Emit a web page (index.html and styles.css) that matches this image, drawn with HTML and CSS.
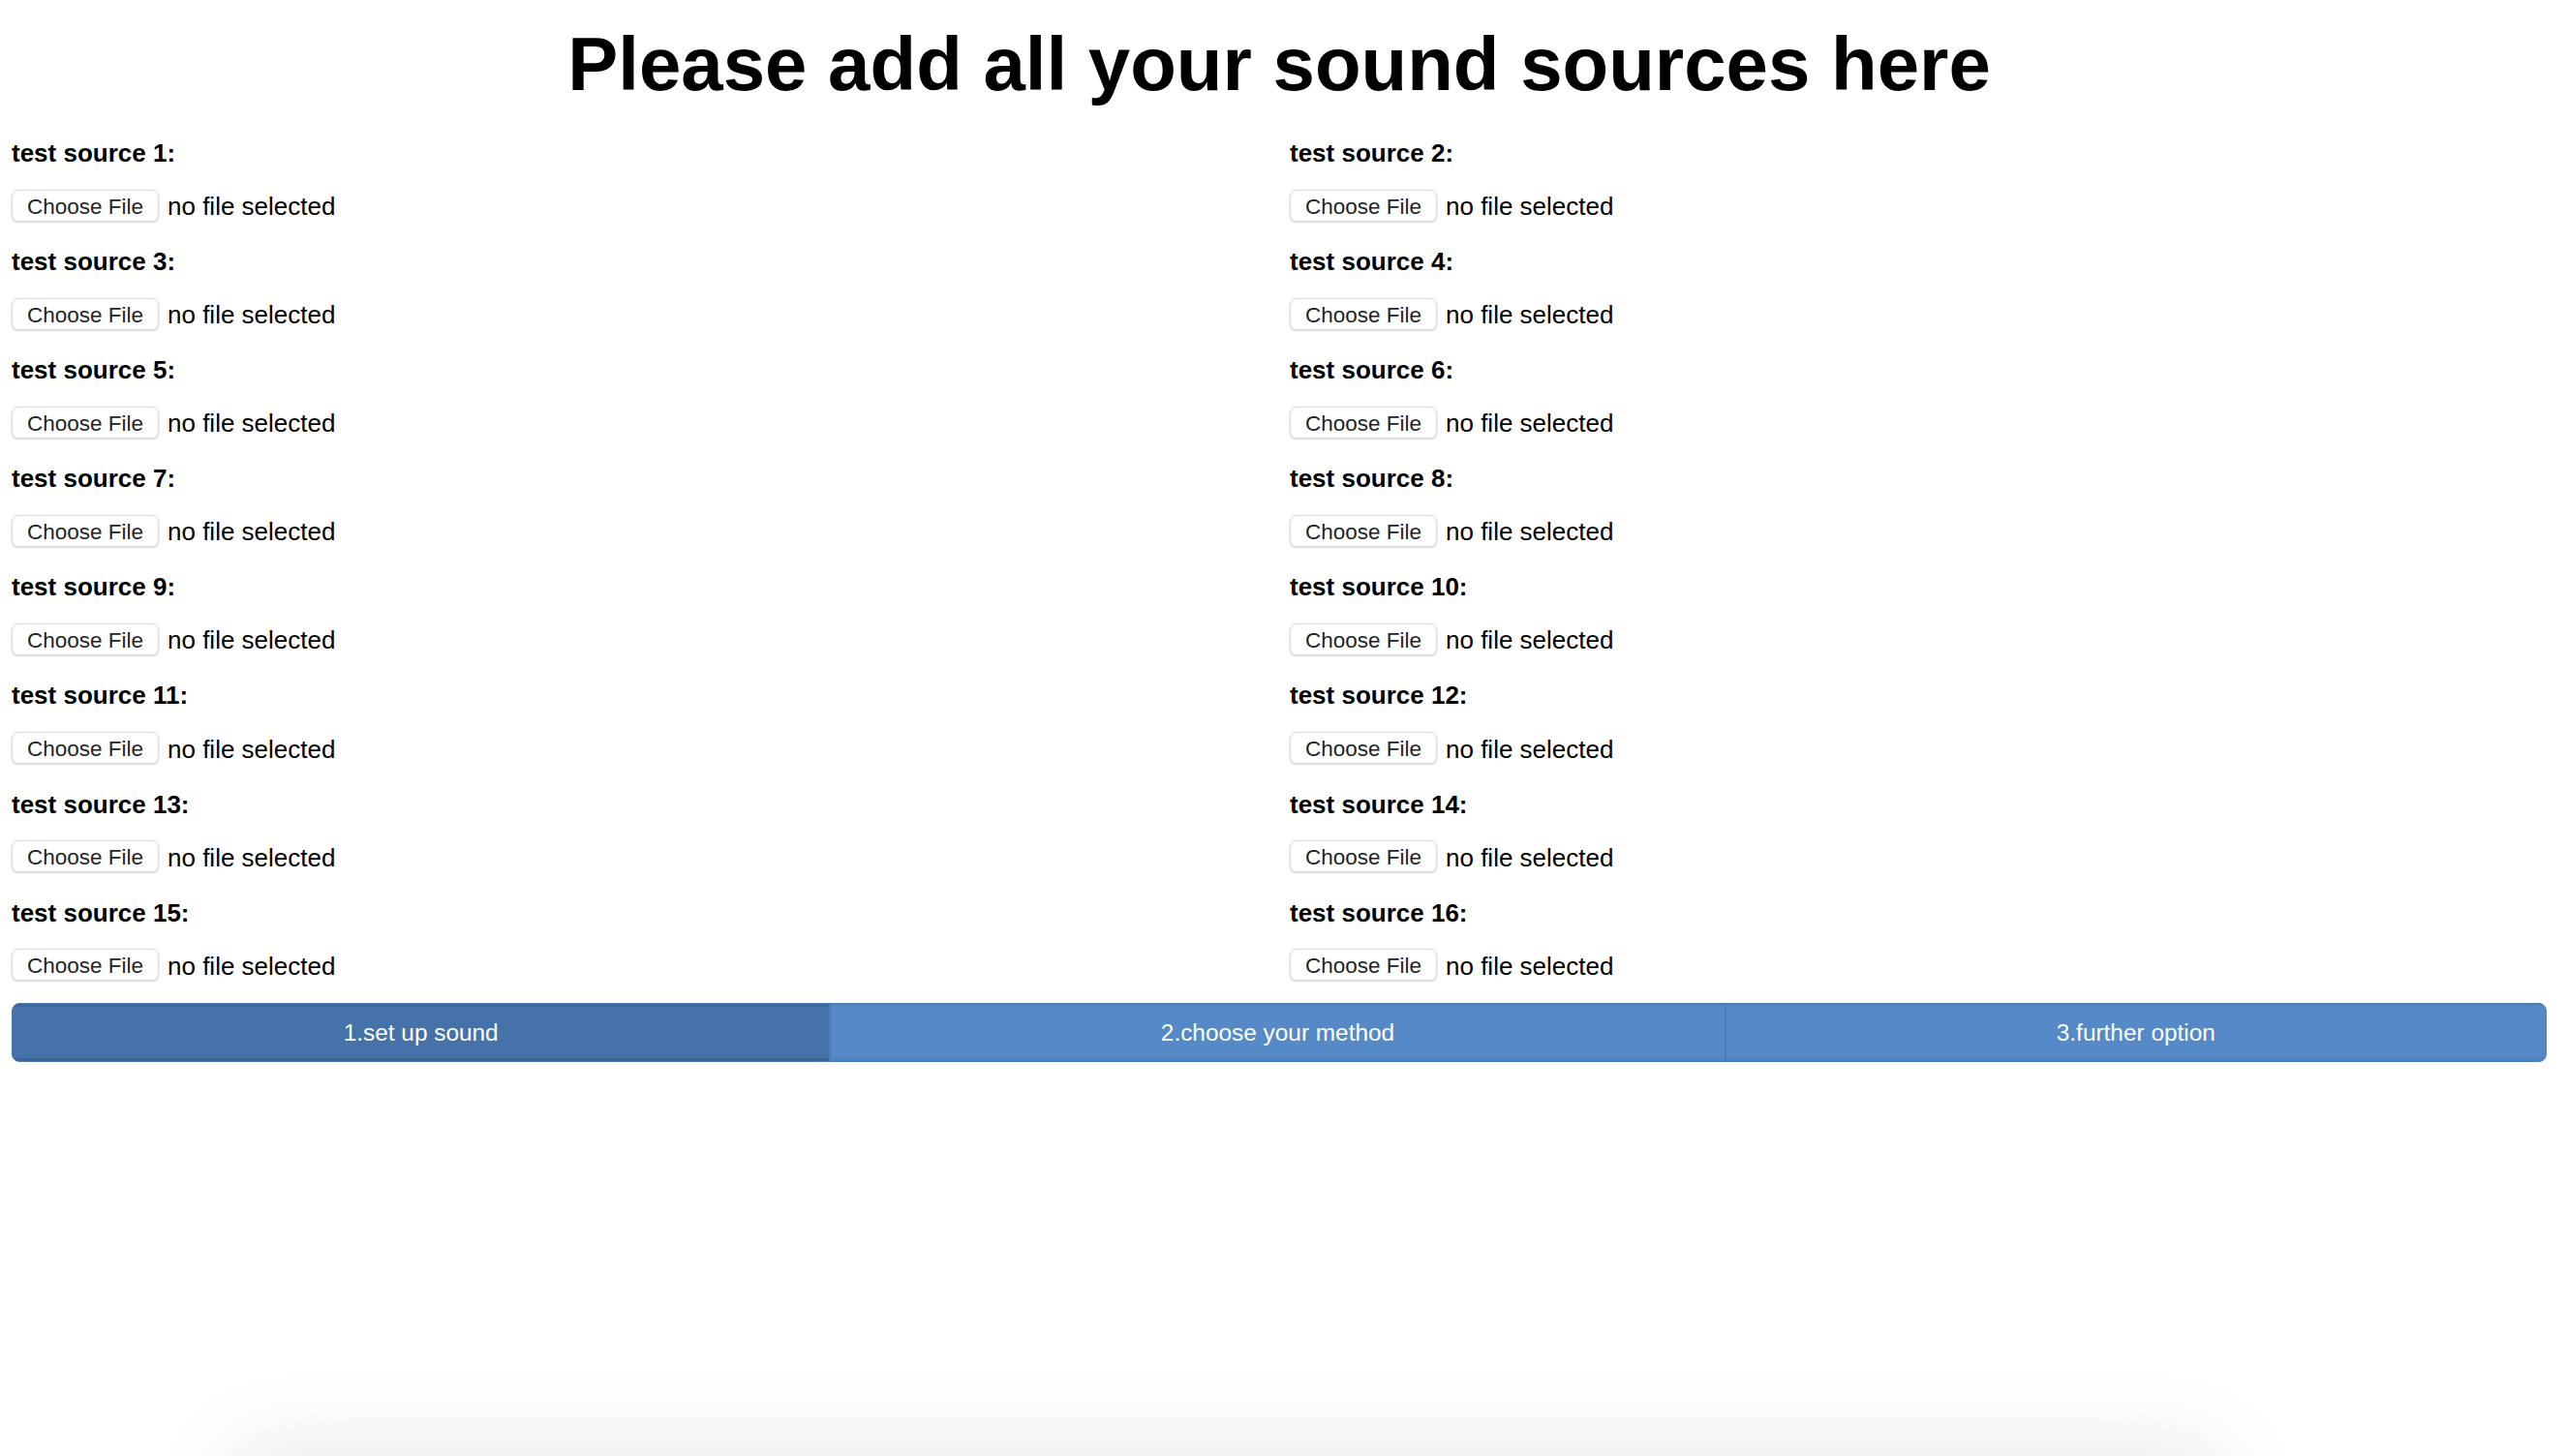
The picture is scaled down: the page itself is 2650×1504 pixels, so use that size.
FILE: index.html
```html
<!DOCTYPE html>
<html lang="en">
<head>
<meta charset="utf-8">
<title>Sound sources</title>
<link rel="stylesheet" href="styles.css">
</head>
<body>
<div class="page">
  <h1 class="title">Please add all your sound sources here</h1>
  <div class="sources">
    <div class="source"><label class="source-label">test source 1:</label><div class="file-row"><span class="file-btn">Choose File</span><span class="file-status">no file selected</span></div></div>
    <div class="source"><label class="source-label">test source 2:</label><div class="file-row"><span class="file-btn">Choose File</span><span class="file-status">no file selected</span></div></div>
    <div class="source"><label class="source-label">test source 3:</label><div class="file-row"><span class="file-btn">Choose File</span><span class="file-status">no file selected</span></div></div>
    <div class="source"><label class="source-label">test source 4:</label><div class="file-row"><span class="file-btn">Choose File</span><span class="file-status">no file selected</span></div></div>
    <div class="source"><label class="source-label">test source 5:</label><div class="file-row"><span class="file-btn">Choose File</span><span class="file-status">no file selected</span></div></div>
    <div class="source"><label class="source-label">test source 6:</label><div class="file-row"><span class="file-btn">Choose File</span><span class="file-status">no file selected</span></div></div>
    <div class="source"><label class="source-label">test source 7:</label><div class="file-row"><span class="file-btn">Choose File</span><span class="file-status">no file selected</span></div></div>
    <div class="source"><label class="source-label">test source 8:</label><div class="file-row"><span class="file-btn">Choose File</span><span class="file-status">no file selected</span></div></div>
    <div class="source"><label class="source-label">test source 9:</label><div class="file-row"><span class="file-btn">Choose File</span><span class="file-status">no file selected</span></div></div>
    <div class="source"><label class="source-label">test source 10:</label><div class="file-row"><span class="file-btn">Choose File</span><span class="file-status">no file selected</span></div></div>
    <div class="source"><label class="source-label">test source 11:</label><div class="file-row"><span class="file-btn">Choose File</span><span class="file-status">no file selected</span></div></div>
    <div class="source"><label class="source-label">test source 12:</label><div class="file-row"><span class="file-btn">Choose File</span><span class="file-status">no file selected</span></div></div>
    <div class="source"><label class="source-label">test source 13:</label><div class="file-row"><span class="file-btn">Choose File</span><span class="file-status">no file selected</span></div></div>
    <div class="source"><label class="source-label">test source 14:</label><div class="file-row"><span class="file-btn">Choose File</span><span class="file-status">no file selected</span></div></div>
    <div class="source"><label class="source-label">test source 15:</label><div class="file-row"><span class="file-btn">Choose File</span><span class="file-status">no file selected</span></div></div>
    <div class="source"><label class="source-label">test source 16:</label><div class="file-row"><span class="file-btn">Choose File</span><span class="file-status">no file selected</span></div></div>
  </div>
  <nav class="steps">
    <div class="step step-active">1.set up sound</div>
    <div class="step">2.choose your method</div>
    <div class="step">3.further option</div>
  </nav>
</div>
<div class="bottom-shade"></div>
</body>
</html>
```

FILE: styles.css
```css
html, body {
  margin: 0;
  padding: 0;
  background: #ffffff;
}

body {
  font-family: "Liberation Sans", Arial, Helvetica, sans-serif;
  color: #000000;
  overflow: hidden;
}

.page {
  padding: 0 20px 0 12px;
}

.title {
  margin: 21px 0 32px 0;
  padding-left: 0;
  font-size: 78px;
  line-height: 90px;
  font-weight: bold;
  text-align: center;
}

.sources {
  display: grid;
  grid-template-columns: 1320px 1fr;
  row-gap: 26.5px;
}

.source {
  display: flex;
  flex-direction: column;
}

.source-label {
  font-size: 26px;
  line-height: 30px;
  font-weight: bold;
  margin-bottom: 22.6px;
}

.file-row {
  display: flex;
  align-items: center;
  height: 33px;
}

.file-btn {
  box-sizing: border-box;
  width: 152px;
  height: 33px;
  border: 1px solid #dadada;
  border-radius: 7px;
  background: #ffffff;
  box-shadow: 0 1px 2px rgba(0, 0, 0, 0.18);
  color: #242424;
  font-size: 22.5px;
  line-height: 33px;
  text-align: center;
}

.file-status {
  margin-left: 9px;
  font-size: 26px;
  line-height: 33px;
  padding-top: 3px;
}

.steps {
  display: grid;
  grid-template-columns: 844fr 925fr 849fr;
  margin-top: 23px;
  height: 61px;
  box-sizing: border-box;
  border: 1px solid #4a7ab3;
  border-radius: 8px;
  overflow: hidden;
  background: #5589c7;
}

.step {
  display: flex;
  align-items: center;
  justify-content: center;
  color: #ffffff;
  font-size: 24.4px;
  background: #5589c7;
  box-shadow: inset 0 2px 0 #4f80bb, inset 0 -3px 0 #4f81bd;
}

.step + .step {
  border-left: 2px solid #4a7db8;
}

.step-active {
  background: #4573a9;
  box-shadow: inset 0 3px 0 #3e6899, inset 0 -3px 0 #3d6696;
}

.bottom-shade {
  position: fixed;
  left: 245px;
  width: 2045px;
  bottom: -120px;
  height: 120px;
  box-shadow: 0 0 100px rgba(0, 0, 0, 0.11);
  background: #eeeeee;
}
```
